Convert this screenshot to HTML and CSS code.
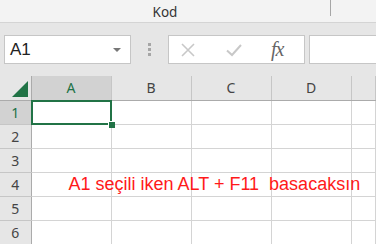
FILE: index.html
```html
<!DOCTYPE html>
<html lang="tr">
<head>
  <meta charset="utf-8">
  <title>Kod</title>
  <link rel="stylesheet" href="styles.css">
</head>
<body>

<div class="titlebar">
  <div class="title">Kod</div>
  <div class="title-rest"></div>
</div>

<div class="formulabar">
  <div class="namebox">
    <span class="cellref">A1</span>
    <span class="caret"></span>
  </div>
  <div class="grip"><i></i><i></i><i></i></div>
  <div class="buttons">
    <svg class="btn" width="16" height="16" viewBox="0 0 16 16">
      <path d="M2 2 L14 14 M14 2 L2 14" stroke="#c8c8c8" stroke-width="1.6" fill="none"/>
    </svg>
    <svg class="btn" width="18" height="16" viewBox="0 0 18 16">
      <path d="M2 8.5 L7 13 L16 3" stroke="#c8c8c8" stroke-width="2" fill="none"/>
    </svg>
    <span class="fx">fx</span>
  </div>
  <div class="formula"></div>
</div>

<table class="sheet">
  <colgroup>
    <col class="c-head">
    <col class="c-cell"><col class="c-cell"><col class="c-cell"><col class="c-cell"><col>
  </colgroup>
  <tr class="colheads">
    <th class="corner"><span class="tri"></span></th>
    <th class="sel">A</th><th>B</th><th>C</th><th>D</th><th></th>
  </tr>
  <tr><th class="sel">1</th><td class="active"></td><td></td><td></td><td></td><td></td></tr>
  <tr><th>2</th><td></td><td></td><td></td><td></td><td></td></tr>
  <tr><th>3</th><td></td><td></td><td></td><td></td><td></td></tr>
  <tr><th>4</th><td class="note">A1 seçili iken ALT + F11&nbsp; basacaksın</td><td></td><td></td><td></td><td></td></tr>
  <tr><th>5</th><td></td><td></td><td></td><td></td><td></td></tr>
  <tr><th>6</th><td></td><td></td><td></td><td></td><td></td></tr>
</table>

</body>
</html>
```
FILE: styles.css
```css
body {
  margin: 0;
  background: #e6e6e6;
  font-family: "Noto Sans", "Open Sans", sans-serif;
  overflow: hidden;
}

/* title strip */
.titlebar {
  display: flex;
  height: 22px;
  background: #f3f3f3;
  border-bottom: 1px solid #d4d4d4;
}
.title {
  width: 330px;
  text-align: center;
  font-size: 13.5px;
  line-height: 24px;
  color: #333;
}
.title-rest {
  flex: 1;
  border-left: 1px solid #a6a6a6;
  height: 16px;
}

/* formula bar */
.formulabar {
  display: flex;
  align-items: center;
  height: 29px;
  padding: 12px 0 12px 4px;
}
.namebox {
  box-sizing: border-box;
  width: 127px;
  height: 29px;
  background: #fff;
  border: 1px solid #c6c6c6;
  display: flex;
  align-items: center;
  justify-content: space-between;
  padding: 0 9px 0 5px;
}
.cellref {
  font-family: "Liberation Sans", Arial, sans-serif;
  font-size: 17px;
  color: #222;
}
.caret {
  width: 0;
  height: 0;
  border-left: 4px solid transparent;
  border-right: 4px solid transparent;
  border-top: 4px solid #777;
}
.grip {
  width: 37px;
  display: flex;
  flex-direction: column;
  align-items: center;
  gap: 2px;
}
.grip i {
  width: 3px;
  height: 3px;
  background: #a6a6a6;
}
.buttons {
  box-sizing: border-box;
  width: 137px;
  height: 29px;
  background: #fff;
  border: 1px solid #c6c6c6;
  display: flex;
  align-items: center;
  padding: 0 0 0 11px;
}
.btn {
  display: block;
}
.buttons .btn + .btn {
  margin-left: 29px;
}
.fx {
  margin-left: 28px;
  font-family: "Liberation Serif", "Times New Roman", serif;
  font-style: italic;
  font-size: 20px;
  color: #666;
  letter-spacing: -1px;
}
.formula {
  box-sizing: border-box;
  flex: 1;
  margin-left: 4px;
  height: 29px;
  background: #fff;
  border: 1px solid #c6c6c6;
  border-right: 0;
}

/* grid */
.sheet {
  border-collapse: collapse;
  table-layout: fixed;
  width: 100%;
  background: #fff;
}
.c-head { width: 31px; }
.c-cell { width: 80px; }
.sheet tr { height: 24px; }
.sheet th {
  background: #e6e6e6;
  font-weight: normal;
  font-size: 14px;
  color: #444;
  border-right: 1px solid #c6c6c6;
  border-bottom: 1px solid #c6c6c6;
  padding: 0;
  text-align: center;
}
.colheads th {
  border-bottom: 1px solid #ababab;
}
.sheet tr th:first-child {
  border-right: 1px solid #ababab;
}
.sheet th.sel {
  background: #d2d2d2;
  color: #217346;
}
.sheet td {
  border-right: 1px solid #d4d4d4;
  border-bottom: 1px solid #d4d4d4;
  padding: 0;
}
.corner {
  position: relative;
}
.tri {
  position: absolute;
  right: 3px;
  bottom: 3px;
  width: 0;
  height: 0;
  border-left: 16px solid transparent;
  border-bottom: 16px solid #217346;
}
td.active {
  position: relative;
}
td.active::before {
  content: "";
  position: absolute;
  left: -1px;
  top: -1px;
  right: -1px;
  bottom: -1px;
  border: 2px solid #217346;
}
td.active::after {
  content: "";
  position: absolute;
  right: -4px;
  bottom: -4px;
  width: 6px;
  height: 6px;
  background: #217346;
  border-left: 1px solid #fff;
  border-top: 1px solid #fff;
}
td.note {
  white-space: nowrap;
  overflow: visible;
  padding-left: 37px;
  font-family: "Liberation Sans", Arial, sans-serif;
  font-size: 18px;
  color: #ff1a1a;
  position: relative;
  z-index: 1;
}
```
